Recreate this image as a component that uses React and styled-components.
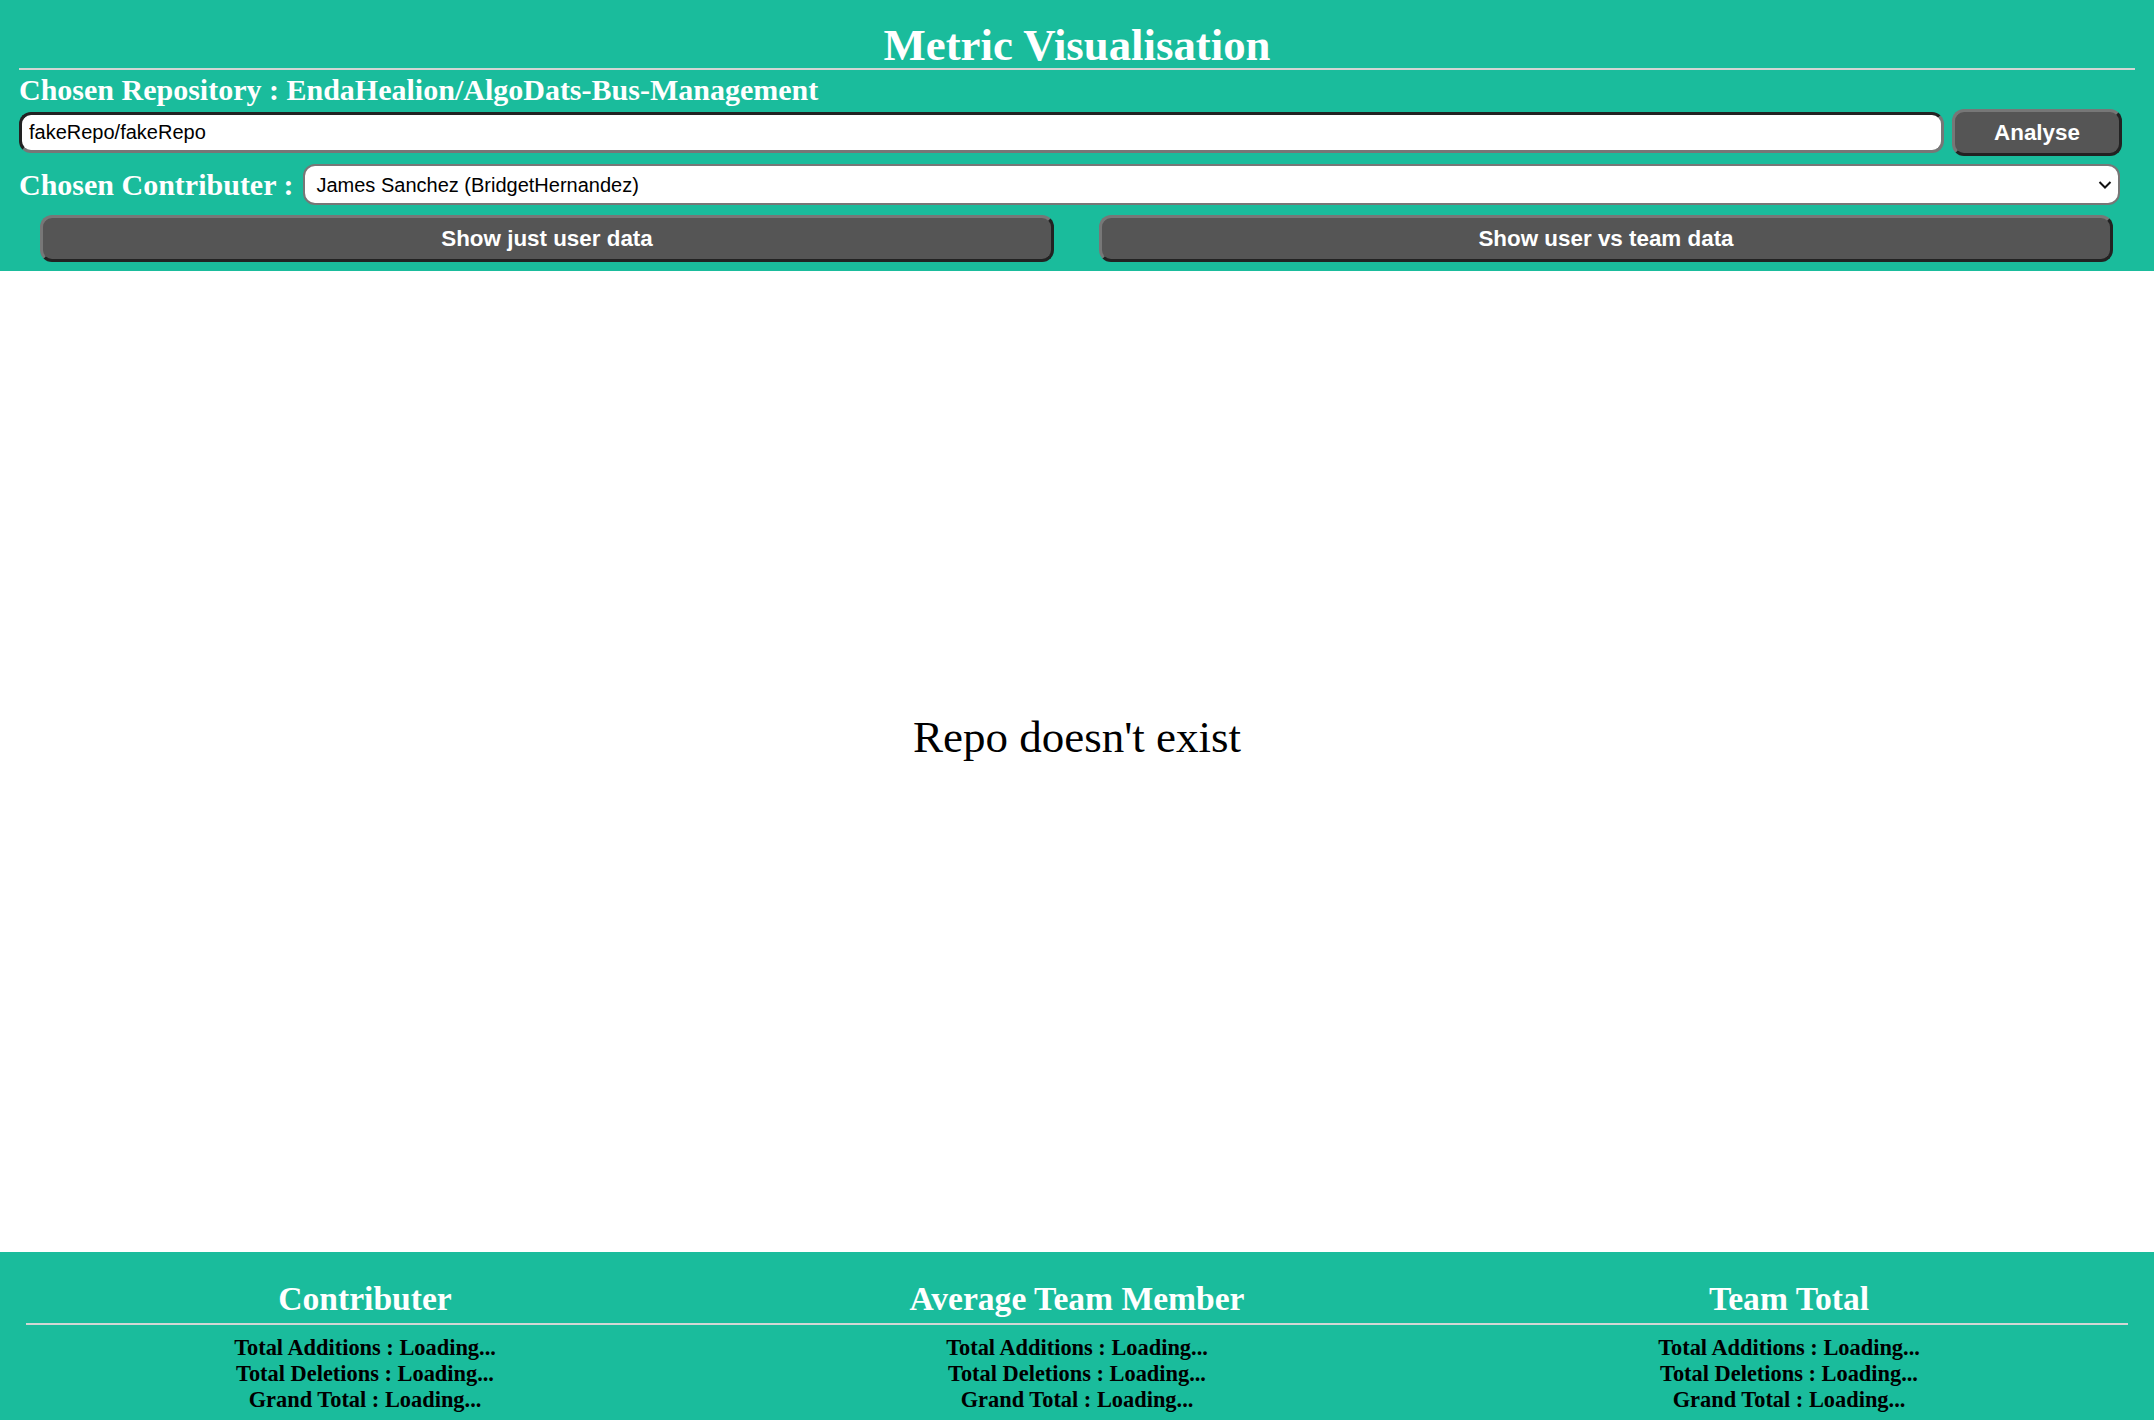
import React, { useState } from 'react';
import styled, { createGlobalStyle } from 'styled-components';

const GlobalStyle = createGlobalStyle`
  html, body {
    margin: 0;
    padding: 0;
    background: #fff;
    font-family: "Liberation Serif", "Times New Roman", serif;
  }
  * { box-sizing: border-box; }
`;

const Page = styled.div`
  width: 100%;
  display: flex;
  flex-direction: column;
`;

const Header = styled.header`
  background-color: #1abc9c;
  padding: 22px 19px 9px 19px;
`;

const Title = styled.h1`
  margin: 0;
  font-size: 44.8px;
  line-height: 46px;
  font-weight: bold;
  text-align: center;
  color: #fff;
`;

const Divider = styled.div`
  height: 2px;
  background-color: #d2d6d4;
  margin: ${props => props.$margin || '0'};
`;

const Label = styled.h3`
  margin: 0;
  font-size: 30px;
  line-height: 34px;
  font-weight: bold;
  color: #fff;
  white-space: nowrap;
`;

const RepoLabel = styled(Label)`
  margin-top: 3px;
`;

const InputRow = styled.div`
  display: flex;
  align-items: center;
  gap: 8px;
  margin: 2px 13px 0 0;
`;

const RepoInput = styled.input`
  flex: 1;
  height: 41px;
  padding: 0 7px;
  border-width: 3px;
  border-style: solid;
  border-color: #222 #777 #777 #222;
  border-radius: 12px;
  background: #fff;
  font-family: "Liberation Sans", Arial, sans-serif;
  font-size: 20px;
  color: #000;
  outline: none;
`;

const DarkButton = styled.button`
  height: 47px;
  width: ${props => props.$width || 'auto'};
  border-width: 3px;
  border-style: solid;
  border-color: #777 #222 #222 #777;
  border-radius: 12px;
  background-color: #555;
  color: #fff;
  font-family: "Liberation Sans", Arial, sans-serif;
  font-weight: bold;
  font-size: 22.4px;
  cursor: pointer;
  padding: 0;
`;

const ContributorRow = styled.div`
  display: flex;
  align-items: center;
  gap: 10px;
  margin: 8px 15px 0 0;
`;

const SelectWrap = styled.div`
  flex: 1;
  position: relative;
  display: flex;

  svg {
    position: absolute;
    right: 8px;
    top: 50%;
    transform: translateY(-50%);
    pointer-events: none;
  }
`;

const ContributorSelect = styled.select`
  flex: 1;
  height: 41px;
  padding: 0 40px 0 11px;
  border: 2px solid #777;
  border-radius: 12px;
  background: #fff;
  font-family: "Liberation Sans", Arial, sans-serif;
  font-size: 20px;
  color: #000;
  outline: none;
  appearance: none;
  -webkit-appearance: none;
`;

const ButtonRow = styled.div`
  display: grid;
  grid-template-columns: 1fr 1fr;
  gap: 45px;
  margin: 10px 22px 0 21px;
`;

const Main = styled.main`
  height: 981px;
  display: flex;
  align-items: center;
  justify-content: center;
  padding-bottom: 49px;
`;

const Message = styled.p`
  margin: 0;
  font-size: 45px;
  color: #000;
`;

const Footer = styled.footer`
  background-color: #1abc9c;
  padding: 28px 9px 7px 9px;
`;

const ColumnGrid = styled.div`
  display: grid;
  grid-template-columns: repeat(3, 1fr);
  text-align: center;
`;

const ColumnHeading = styled.h2`
  margin: 0;
  font-size: 33.6px;
  line-height: 38px;
  font-weight: bold;
  color: #fff;
`;

const StatList = styled.div`
  display: flex;
  flex-direction: column;
  margin-top: 10px;
`;

const Stat = styled.p`
  margin: 0;
  font-size: 22.4px;
  line-height: 26px;
  font-weight: bold;
  color: #000;
`;

const contributors = ['James Sanchez (BridgetHernandez)'];
const columns = ['Contributer', 'Average Team Member', 'Team Total'];

function App() {
  const [repo, setRepo] = useState('fakeRepo/fakeRepo');
  const [contributor, setContributor] = useState(contributors[0]);

  return (
    <Page>
      <GlobalStyle />
      <Header>
        <Title>Metric Visualisation</Title>
        <Divider />
        <RepoLabel>Chosen Repository : EndaHealion/AlgoDats-Bus-Management</RepoLabel>
        <InputRow>
          <RepoInput value={repo} onChange={(e) => setRepo(e.target.value)} />
          <DarkButton $width="170px">Analyse</DarkButton>
        </InputRow>
        <ContributorRow>
          <Label>Chosen Contributer :</Label>
          <SelectWrap>
            <ContributorSelect value={contributor} onChange={(e) => setContributor(e.target.value)}>
              {contributors.map(c => <option key={c} value={c}>{c}</option>)}
            </ContributorSelect>
            <svg width="14" height="9" viewBox="0 0 14 9">
              <path d="M1.5 1.5 L7 7 L12.5 1.5" fill="none" stroke="#111" strokeWidth="2" />
            </svg>
          </SelectWrap>
        </ContributorRow>
        <ButtonRow>
          <DarkButton>Show just user data</DarkButton>
          <DarkButton>Show user vs team data</DarkButton>
        </ButtonRow>
      </Header>

      <Main>
        <Message>Repo doesn't exist</Message>
      </Main>

      <Footer>
        <ColumnGrid>
          {columns.map(name => <ColumnHeading key={name}>{name}</ColumnHeading>)}
        </ColumnGrid>
        <Divider $margin="5px 17px 0 17px" />
        <ColumnGrid>
          {columns.map(name => (
            <StatList key={name}>
              <Stat>Total Additions : Loading...</Stat>
              <Stat>Total Deletions : Loading...</Stat>
              <Stat>Grand Total : Loading...</Stat>
            </StatList>
          ))}
        </ColumnGrid>
      </Footer>
    </Page>
  );
}

export default App;
